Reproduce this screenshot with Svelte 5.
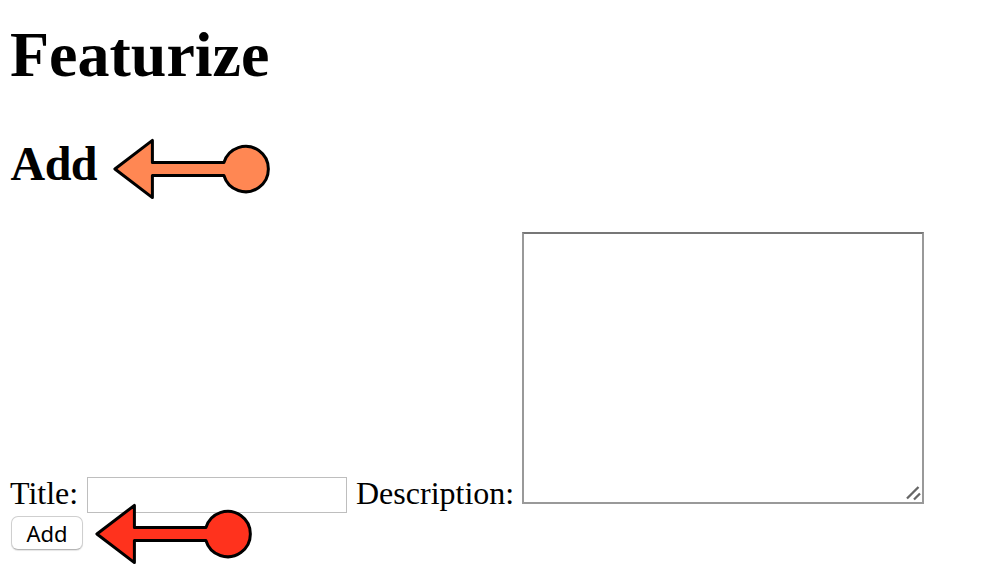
<script>
  let title = $state('');
  let description = $state('');
</script>

{#snippet arrow(kind)}
  <svg class="arrow {kind}" width="160" height="64" viewBox="0 0 160 64" aria-hidden="true">
    <path d="M2.9 32 L40.4 3.4 V25.6 H111.9 A22.7 22.7 0 1 1 111.9 38.5 H40.4 V60.6 Z" />
  </svg>
{/snippet}

<main>
  <h1>Featurize</h1>
  <h2><span>Add</span>{@render arrow('orange')}</h2>
  <form onsubmit={(e) => e.preventDefault()}>
    <div class="fields">
      <label class="title" for="title">Title:</label>
      <input id="title" type="text" bind:value={title} />
      <label class="description" for="description">Description:</label>
      <div class="area">
        <textarea id="description" bind:value={description}></textarea>
        <svg class="grip" width="16" height="16" viewBox="0 0 16 16" aria-hidden="true">
          <path d="M1 12.5 L12.5 1 M8 13.5 L14 7.5" />
        </svg>
      </div>
    </div>
    <div class="actions">
      <button type="submit">Add</button>
      {@render arrow('red')}
    </div>
  </form>
</main>

<style>
  :global(body) {
    background: #fff;
  }
  main {
    box-sizing: border-box;
    height: 584px;
    overflow: hidden;
    padding: 19px 0 0 10px;
    color: #000;
    font-family: 'Liberation Serif', 'Times New Roman', serif;
    font-size: 32px;
  }
  h1 {
    margin: 0;
    font-size: 64px;
    line-height: 72px;
  }
  h2 {
    position: relative;
    margin: 46px 0 0;
    font-size: 48px;
    line-height: 54px;
  }
  h2 span {
    padding-left: 0.5px;
    letter-spacing: -0.5px;
  }
  form {
    margin-top: 41px;
  }
  .fields {
    display: flex;
    align-items: flex-end;
    height: 281px;
  }
  label {
    line-height: 36px;
    margin-bottom: 2px;
    white-space: nowrap;
  }
  .title {
    width: 77px;
  }
  .description {
    width: 166px;
    margin-left: 9px;
  }
  input {
    box-sizing: border-box;
    width: 260px;
    height: 36px;
    margin: 0;
    padding: 2px 6px;
    border: 1px solid #bebebe;
    border-radius: 0;
    background: #fff;
    font: 22px 'Noto Sans', sans-serif;
    outline: none;
  }
  .area {
    position: relative;
    align-self: flex-start;
    width: 402px;
    height: 272px;
  }
  textarea {
    display: block;
    box-sizing: border-box;
    width: 402px;
    height: 272px;
    margin: 0;
    padding: 4px;
    border: 2px solid #999;
    border-top-color: #777;
    border-radius: 0;
    background: #fff;
    font: 22px 'Liberation Mono', monospace;
    resize: none;
    outline: none;
  }
  .grip {
    position: absolute;
    right: 2px;
    bottom: 2px;
    fill: none;
    stroke: #666;
    stroke-width: 2.3;
  }
  .actions {
    position: relative;
    padding: 3px 0 0 1px;
  }
  button {
    display: block;
    box-sizing: border-box;
    width: 72px;
    height: 34px;
    margin: 0;
    padding: 0;
    border: 1px solid #cfcfcf;
    border-bottom-color: #b5b5b5;
    border-radius: 7px;
    background: #fff;
    box-shadow: 0 1px 1px rgba(0, 0, 0, 0.1);
    color: #000;
    font: 22px/32px 'Noto Sans', sans-serif;
  }
  .arrow {
    position: absolute;
    stroke: #000;
    stroke-width: 3;
    stroke-linejoin: round;
  }
  .orange {
    left: 102px;
    top: 0;
    fill: #ff8753;
  }
  .red {
    left: 84px;
    top: -11px;
    fill: #ff321d;
  }
</style>
